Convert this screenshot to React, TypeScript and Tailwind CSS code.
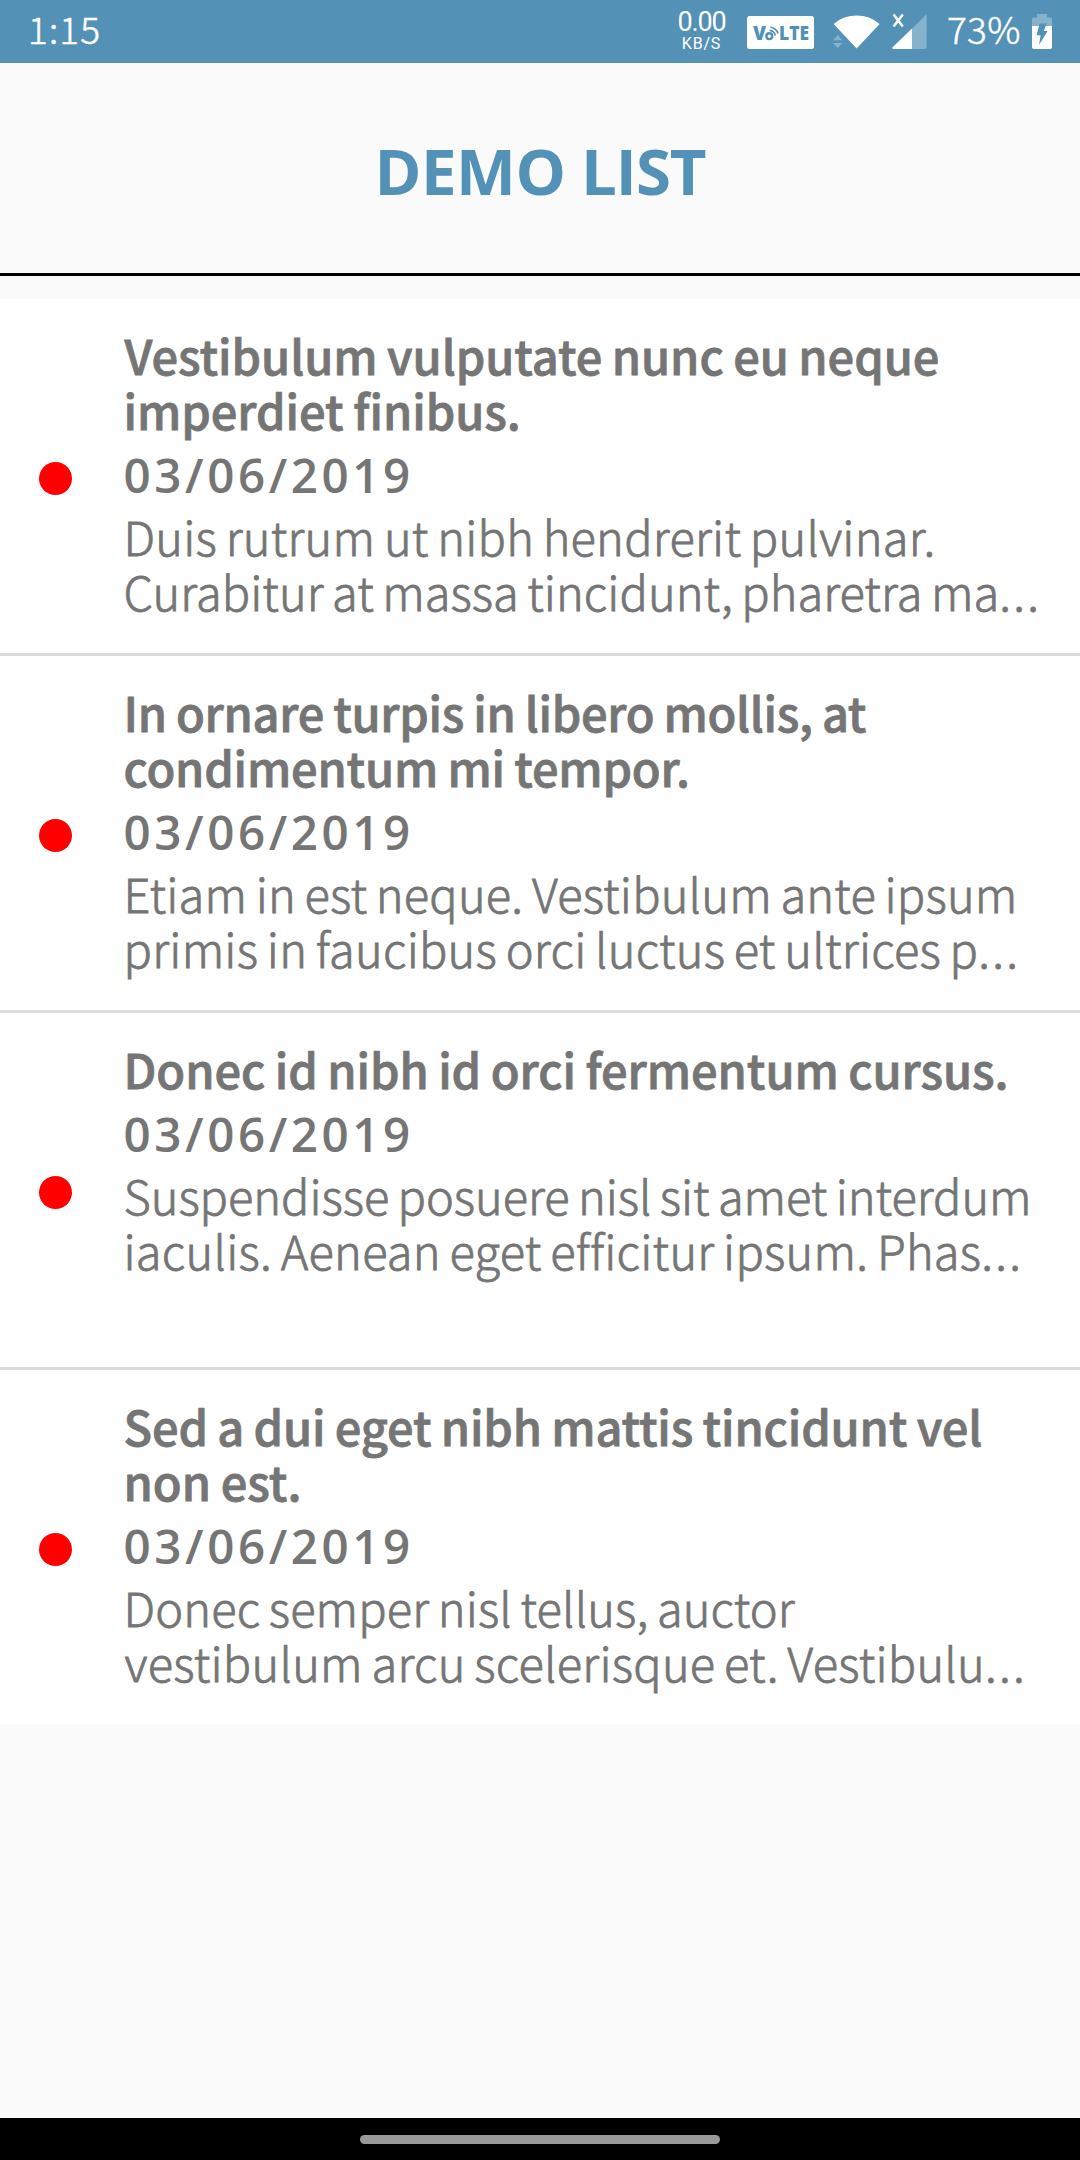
type Line = { text: string; tracking: string; clipped?: boolean };
type Item = { title: Line[]; date: string; body: Line[] };

const items: Item[] = [
  {
    title: [
      { text: "Vestibulum vulputate nunc eu neque", tracking: "tracking-[-0.05px] ml-px" },
      { text: "imperdiet finibus.", tracking: "tracking-[-0.05px]" },
    ],
    date: "03/06/2019",
    body: [
      { text: "Duis rutrum ut nibh hendrerit pulvinar.", tracking: "tracking-[0.24px]" },
      { text: "Curabitur at massa tincidunt, pharetra ma", tracking: "tracking-[0.05px]", clipped: true },
    ],
  },
  {
    title: [
      { text: "In ornare turpis in libero mollis, at", tracking: "tracking-[-0.31px]" },
      { text: "condimentum mi tempor.", tracking: "tracking-[-0.2px]" },
    ],
    date: "03/06/2019",
    body: [
      { text: "Etiam in est neque. Vestibulum ante ipsum", tracking: "tracking-[0.2px]" },
      { text: "primis in faucibus orci luctus et ultrices p", tracking: "tracking-[0.25px]", clipped: true },
    ],
  },
  {
    title: [{ text: "Donec id nibh id orci fermentum cursus.", tracking: "tracking-[-0.06px]" }],
    date: "03/06/2019",
    body: [
      { text: "Suspendisse posuere nisl sit amet interdum", tracking: "tracking-[-0.03px]" },
      { text: "iaculis. Aenean eget efficitur ipsum. Phas", tracking: "tracking-[0.25px]", clipped: true },
    ],
  },
  {
    title: [
      { text: "Sed a dui eget nibh mattis tincidunt vel", tracking: "tracking-[-0.15px]" },
      { text: "non est.", tracking: "tracking-[0px]" },
    ],
    date: "03/06/2019",
    body: [
      { text: "Donec semper nisl tellus, auctor", tracking: "tracking-[0.14px]" },
      { text: "vestibulum arcu scelerisque et. Vestibulu", tracking: "tracking-[0.25px] ml-px", clipped: true },
    ],
  },
];

function VolteIcon() {
  return (
    <svg className="ml-[22px] mt-4 h-[33px] w-[67px]" viewBox="0 0 67 33">
      <rect width="67" height="33" rx="2.5" fill="#fff" />
      <g fill="#5391b6" fontFamily="'Open Sans', sans-serif" fontWeight="800">
        <text x="6" y="24" fontSize="19.5" textLength="13" lengthAdjust="spacingAndGlyphs">V</text>
        <text x="32" y="24" fontSize="19.5" textLength="30" lengthAdjust="spacingAndGlyphs">LTE</text>
      </g>
      <g fill="none" stroke="#5391b6">
        <circle cx="22.3" cy="20.2" r="2.9" strokeWidth="2.4" />
        <path d="M22.6 14.4 A6 6 0 0 1 28.2 19.6" strokeWidth="1.6" />
        <path d="M23.4 11.2 A9 9 0 0 1 31 17.4" strokeWidth="1.6" />
      </g>
    </svg>
  );
}

function WifiIcon() {
  return (
    <svg className="ml-[19px] mt-[14px] h-[35px] w-[47px]" viewBox="0 0 47 35">
      <path d="M0.6 10 A35 35 0 0 1 46.6 10 L23.6 34.4 Z" fill="#fff" />
      <g fill="#86b2cc">
        <path d="M0 26.2 L4.8 21 L9.4 26.2 Z" />
        <path d="M0 29 L9.4 29 L4.8 34 Z" />
      </g>
    </svg>
  );
}

function SignalIcon() {
  return (
    <svg className="ml-3 mt-[13px] h-9 w-[35px]" viewBox="0 0 35 36">
      <path d="M34.6 1.2 V34 a2 2 0 0 1 -2 2 H20 V15.6 Z" fill="#86b2cc" />
      <path d="M20 15.6 V36 H1 q-1.4 -0.6 -0.4 -1.8 Z" fill="#fff" />
      <path d="M1.6 1.6 L10.8 13.6 M10.8 1.6 L1.6 13.6" stroke="#fff" strokeWidth="2.5" />
    </svg>
  );
}

function BatteryIcon() {
  return (
    <svg className="mr-7 mt-[14px] h-[35px] w-5" viewBox="0 0 20 35">
      <path d="M5 0 H15 V3.6 H18.4 Q20 3.6 20 5.4 V12 H0 V5.4 Q0 3.6 1.6 3.6 H5 Z" fill="#86b2cc" />
      <path d="M0 12 H20 V33.2 Q20 35 18.2 35 H1.8 Q0 35 0 33.2 Z" fill="#fff" />
      <path d="M7.6 9.6 H14.6 L11.8 17 H15.6 L7 31 L8.6 21.2 H4.6 Z" fill="#5391b6" />
    </svg>
  );
}

function StatusBar() {
  return (
    <div className="flex h-[63px] items-start bg-[#5391b6] text-white">
      <div className="ml-[28px] grow text-[37px] font-light leading-[56px] tracking-[1.1px] [-webkit-text-stroke:0.5px]">1:15</div>
      <div className="mt-[9px] flex w-[47px] flex-col items-center font-['Roboto'] leading-none">
        <span className="text-[27px] leading-[27px] tracking-[-1.2px]">0.00</span>
        <span className="text-[16px] leading-[16px] tracking-[0.8px]">KB/S</span>
      </div>
      <VolteIcon />
      <WifiIcon />
      <SignalIcon />
      <div className="ml-5 w-[85px] whitespace-nowrap text-[37px] font-light leading-[56px] tracking-[0.3px] [-webkit-text-stroke:0.5px]">73%</div>
      <BatteryIcon />
    </div>
  );
}

function ListRow({ item, last }: { item: Item; last: boolean }) {
  return (
    <li className={last ? "bg-white" : "border-b-[3px] border-[#dcdcdc] bg-white"}>
      <div className="flex h-[354px] items-center">
        <div className="ml-[39px] mt-[5px] size-[33px] shrink-0 rounded-full bg-[#ff0000]" />
        <div className="ml-[51.5px] h-full whitespace-nowrap pt-7 text-[47px] leading-[55px] text-[#757575]">
          <h2 className="font-medium [-webkit-text-stroke:0.8px] [word-spacing:-1px]">
            {item.title.map((l) => (
              <div key={l.text} className={l.tracking}>{l.text}</div>
            ))}
          </h2>
          <div className="mt-[10px] font-['Open_Sans'] text-[47.5px] font-[650] tracking-[3.6px]">{item.date}</div>
          <div className="mt-1.5 font-light [-webkit-text-stroke:0.8px] [word-spacing:-2px]">
            {item.body.map((l) => (
              <div key={l.text} className={l.tracking}>
                {l.text}
                {l.clipped && <span className="tracking-[2.2px]">...</span>}
              </div>
            ))}
          </div>
        </div>
      </div>
    </li>
  );
}

export default function App() {
  return (
    <div className="flex h-[2160px] w-[1080px] flex-col overflow-hidden bg-[#fafafa] font-['Noto_Sans_CJK_SC','Noto_Sans',sans-serif]">
      <StatusBar />
      <header className="h-[213px] border-b-[3px] border-black">
        <h1 className="ml-[374.5px] whitespace-nowrap pt-[3px] font-['Open_Sans'] text-[63.5px] font-[670] leading-[210px] text-[#5391b6]">
          <span className="tracking-[-0.5px]">DEMO</span>
          <span className="tracking-[-1px]"> LIST</span>
        </h1>
      </header>
      <ul className="mt-[23px] grow">
        {items.map((item, i) => (
          <ListRow key={i} item={item} last={i === items.length - 1} />
        ))}
      </ul>
      <div className="flex h-[42px] justify-center bg-black pt-[17px]">
        <div className="h-[9px] w-[360px] rounded-full bg-[#999999]" />
      </div>
    </div>
  );
}
